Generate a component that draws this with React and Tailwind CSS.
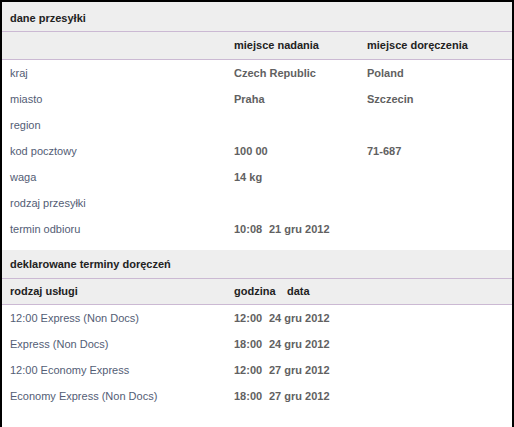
import React from "react";

const labelCls = "text-[#535d75]";
const valCls = "font-bold text-[#616161]";

function Row({ label, a, b }) {
  return (
    <div className="flex h-[26px] items-center">
      <div className={`w-[232px] pl-[8px] ${labelCls}`}>{label}</div>
      <div className={`w-[133px] ${valCls}`}>{a}</div>
      <div className={`flex-1 ${valCls}`}>{b}</div>
    </div>
  );
}

function TimeRow({ label, time, date }) {
  return (
    <div className="flex h-[26px] items-center">
      <div className={`w-[232px] pl-[8px] ${labelCls}`}>{label}</div>
      <div className={`flex ${valCls}`}>
        <span className="w-[35px]">{time}</span>
        <span>{date}</span>
      </div>
    </div>
  );
}

export default function App() {
  return (
    <div
      className="min-h-[427px] w-[514px] border-2 border-b-0 border-black bg-white text-[11px] leading-[13px]"
      style={{ fontFamily: '"Liberation Sans", Arial, sans-serif' }}
    >
      <div className="flex h-[30px] items-center border-b border-[#cbb9d3] bg-[#eeeeee] pl-[8px] pt-[3px] font-bold text-[#222]">
        dane przesyłki
      </div>
      <div className="flex h-[28px] items-center border-b border-[#cbb9d3] bg-[#eeeeee] font-bold text-[#222]">
        <div className="w-[232px]" />
        <div className="w-[133px]">miejsce nadania</div>
        <div className="flex-1">miejsce doręczenia</div>
      </div>
      <Row label="kraj" a="Czech Republic" b="Poland" />
      <Row label="miasto" a="Praha" b="Szczecin" />
      <Row label="region" a="" b="" />
      <Row label="kod pocztowy" a="100 00" b="71-687" />
      <Row label="waga" a="14 kg" b="" />
      <Row label="rodzaj przesyłki" a="" b="" />
      <TimeRow label="termin odbioru" time="10:08" date="21 gru 2012" />

      <div className="mt-[8px] flex h-[29px] items-center border-b border-[#cbb9d3] bg-[#eeeeee] pl-[8px] font-bold text-[#222]">
        deklarowane terminy doręczeń
      </div>
      <div className="flex h-[26px] items-center border-b border-[#cbb9d3] bg-[#eeeeee] font-bold text-[#222]">
        <div className="w-[232px] pl-[8px]">rodzaj usługi</div>
        <div className="flex">
          <span className="w-[53px]">godzina</span>
          <span>data</span>
        </div>
      </div>
      <TimeRow label="12:00 Express (Non Docs)" time="12:00" date="24 gru 2012" />
      <TimeRow label="Express (Non Docs)" time="18:00" date="24 gru 2012" />
      <TimeRow label="12:00 Economy Express" time="12:00" date="27 gru 2012" />
      <TimeRow label="Economy Express (Non Docs)" time="18:00" date="27 gru 2012" />
    </div>
  );
}
